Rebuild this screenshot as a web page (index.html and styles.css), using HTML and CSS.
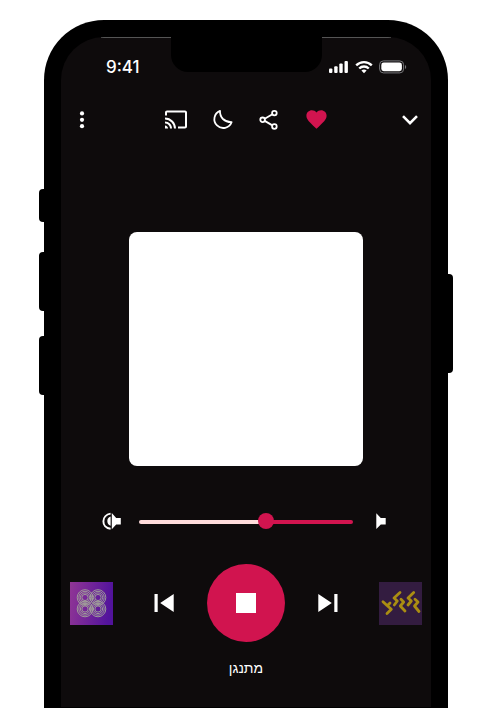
FILE: index.html
```html
<!DOCTYPE html>
<html lang="he">
<head>
<meta charset="utf-8">
<meta name="viewport" content="width=device-width, initial-scale=1">
<title>Radio player</title>
<link rel="stylesheet" href="styles.css">
</head>
<body>
<main class="phone">
  <span class="side-key mute"></span>
  <span class="side-key volume-up"></span>
  <span class="side-key volume-down"></span>
  <span class="side-key power"></span>
  <div class="notch"></div>
  <div class="screen">
    <header class="status">
      <time class="clock">9:41</time>
      <div class="indicators">
        <svg width="20" height="14" viewBox="0 0 20 14" fill="#fff" aria-hidden="true">
          <rect x="0" y="8.4" width="3.4" height="4.6" rx="1"/><rect x="5.2" y="6.2" width="3.4" height="6.8" rx="1"/><rect x="10.3" y="3.6" width="3.4" height="9.4" rx="1"/><rect x="15.5" y="1" width="3.4" height="12" rx="1"/>
        </svg>
        <svg width="18" height="14" viewBox="0 0 18 14" fill="none" stroke="#fff" stroke-width="2.3" aria-hidden="true">
          <path d="M1.2 5.4a11 11 0 0 1 15.6 0M4.2 8.5a6.8 6.8 0 0 1 9.6 0"/><path d="M9 13.2 6.4 10.6a3.8 3.8 0 0 1 5.2 0z" fill="#fff" stroke="none"/>
        </svg>
        <svg width="28" height="14" viewBox="0 0 28 14" aria-hidden="true">
          <rect x=".6" y=".9" width="24" height="12" rx="3.8" fill="none" stroke="#77777a"/><rect x="2.3" y="2.6" width="20.6" height="8.6" rx="2.4" fill="#fff"/><path d="M26 5v4c1.6-.7 1.6-3.3 0-4z" fill="#77777a"/>
        </svg>
      </div>
    </header>

    <nav class="toolbar">
      <button class="icon-button" type="button" aria-label="Menu">
        <svg width="24" height="24" viewBox="0 0 24 24" fill="#fff"><circle cx="12" cy="5.4" r="2.1"/><circle cx="12" cy="11.8" r="2.1"/><circle cx="12" cy="18.2" r="2.1"/></svg>
      </button>
      <div class="actions">
        <button class="icon-button" type="button" aria-label="Cast">
          <svg width="24" height="24" viewBox="0 0 24 24" fill="#fff"><path d="M21 2.500H3c-1.100 0-2 .9-2 2v3h2V4.500h18v14h-7v2h7c1.100 0 2-.9 2-2v-14c0-1.100-.9-2-2-2zM1 17.500v3h3c0-1.660-1.340-3-3-3zm0-4v2c2.760 0 5 2.240 5 5h2c0-3.870-3.130-7-7-7zm0-4v2a9 9 0 0 1 9 9h2c0-6.080-4.930-11-11-11z"/></svg>
        </button>
        <button class="icon-button" type="button" aria-label="Sleep timer">
          <svg width="24" height="24" viewBox="0 0 24 24" fill="none" stroke="#fff" stroke-width="1.800" stroke-linejoin="round"><path d="M9 2.800A8.900 8.900 0 1 0 20.600 14.200Q15.600 14.400 12 11Q8.700 7.600 9 2.800z"/></svg>
        </button>
        <button class="icon-button" type="button" aria-label="Share">
          <svg width="24" height="24" viewBox="0 0 24 24" fill="none" stroke="#fff" stroke-width="1.800"><circle cx="4.600" cy="11.800" r="2.300"/><circle cx="16.400" cy="5.100" r="2.300"/><circle cx="16.400" cy="18.500" r="2.300"/><path d="M6.700 10.700 14.400 6.200M6.700 12.900 14.400 17.400"/></svg>
        </button>
        <button class="icon-button" type="button" aria-label="Favourite">
          <svg width="24" height="24" viewBox="0 0 24 24" fill="#d1144f"><path d="M11.500 20.700 10.100 19.400C4.900 14.700 1.400 11.600 1.400 7.800 1.400 4.600 3.900 2.300 6.900 2.300c1.800 0 3.500.8 4.600 2.100 1.100-1.300 2.800-2.100 4.600-2.100 3 0 5.500 2.300 5.500 5.500 0 3.800-3.500 6.900-8.700 11.600z"/></svg>
        </button>
      </div>
      <button class="icon-button" type="button" aria-label="Minimise">
        <svg width="24" height="24" viewBox="0 0 24 24" fill="none" stroke="#fff" stroke-width="2.600"><path d="M5 8.200 12 15.200 19 8.200"/></svg>
      </button>
    </nav>

    <div class="artwork"></div>

    <div class="volume">
      <svg class="speaker" width="20" height="20" viewBox="0 0 20 20" fill="#fff" aria-hidden="true">
        <path d="M10.800 1 15.200 6H19.800V12.400H15.200L10.800 17.200z"/><path d="M9.600 4.600v9.200C5.200 12.600 5.200 5.800 9.600 4.600z"/><path d="M9.600 1.600C.4 3-.4 15.400 9.600 16.800" fill="none" stroke="#fff" stroke-width="1.900"/>
      </svg>
      <input class="slider" type="range" min="0" max="100" value="60" aria-label="Volume">
      <svg class="speaker" width="20" height="20" viewBox="0 0 20 20" fill="#fff" aria-hidden="true"><path d="M5.300 1.200 9.800 6H14.700V12.400H9.800L5.300 17z"/></svg>
    </div>

    <div class="controls">
      <a class="station" href="#station-88" aria-label="88">
        <svg width="43" height="43" viewBox="0 0 43 43">
          <defs>
            <linearGradient id="violet" x2="1" y2=".15"><stop stop-color="#913695"/><stop offset="1" stop-color="#52139c"/></linearGradient>
            <g id="rings" fill="none" stroke="#a3a698" stroke-width=".9"><circle r="7.800"/><circle r="6.200"/><circle r="4.600"/><circle r="3.100"/></g>
          </defs>
          <rect width="43" height="43" fill="url(#violet)"/>
          <use href="#rings" x="15" y="15.500"/><use href="#rings" x="28" y="15.500"/><use href="#rings" x="15" y="27"/><use href="#rings" x="28" y="27"/>
        </svg>
      </a>
      <div class="transport">
        <button class="skip" type="button" aria-label="Previous"><svg width="20" height="20" viewBox="0 0 20 20" fill="#fff"><path d="M.5 1h3.200v18H.5zM19.700 1v18L6.200 10z"/></svg></button>
        <button class="stop" type="button" aria-label="Stop"><svg width="20" height="20" viewBox="0 0 20 20"><path fill="#fff" d="M0 0h20v20H0z"/></svg></button>
        <button class="skip" type="button" aria-label="Next"><svg width="20" height="20" viewBox="0 0 20 20" fill="#fff"><path d="M16.300 1h3.200v18h-3.200zM.3 1v18L13.800 10z"/></svg></button>
      </div>
      <a class="station" href="#station-next" aria-label="Next station">
        <svg width="43" height="43" viewBox="0 0 43 43">
          <rect width="43" height="43" fill="#331c40"/>
          <path fill="none" stroke="#aa8d12" stroke-width="2.800" stroke-linecap="round" stroke-linejoin="round" d="M4 19.700 8.300 23.700 11 21M8.300 23.700 12.300 27.300 8 31.500M21 10.500 15 16 18.300 19 15.300 23M22 17.300 24.700 20 21.300 24 26 29M34.700 10.500 29 16 32.300 19 29 23M36 17.300 39 20 35.500 24 40 29.500"/>
        </svg>
      </a>
    </div>
    <p class="state" dir="rtl">מתנגן</p>
  </div>
</main>
</body>
</html>
```

FILE: styles.css
```css
* {
  box-sizing: border-box;
}

body {
  margin: 0;
  background: #fff;
  color: #fff;
  font-family: Inter, "Open Sans", sans-serif;
}

.phone {
  position: relative;
  display: flex;
  min-height: calc(100vh - 20px);
  margin: 20px 36px 0 44px;
  padding: 17px 17px 1px;
  border-radius: 60px 60px 0 0;
  background: #000;
}

.side-key {
  position: absolute;
  left: -5px;
  width: 10px;
  height: 59px;
  border-radius: 4px;
  background: #000;
}

.mute {
  top: 169px;
  height: 33px;
}

.volume-up {
  top: 232px;
}

.volume-down {
  top: 316px;
}

.power {
  top: 254px;
  right: -5px;
  left: auto;
  height: 99px;
}

.notch {
  position: absolute;
  top: 16px;
  right: 126px;
  left: 127px;
  height: 36px;
  border-radius: 0 0 17px 17px;
  background: #000;
}

.screen {
  display: flex;
  flex: 1;
  flex-direction: column;
  min-width: 0;
  border-radius: 43px 43px 0 0;
  background: linear-gradient(#555, #555) center top / 290px 1px no-repeat #0e0b0c;
}

.status {
  display: flex;
  align-items: center;
  justify-content: space-between;
  height: 60px;
  padding: 0 24px 0 45px;
}

.clock {
  font-size: 17px;
  font-weight: 500;
  line-height: 20px;
}

.indicators {
  display: flex;
  gap: 6px;
}

.toolbar {
  display: flex;
  align-items: center;
  justify-content: space-between;
  height: 46px;
  padding: 0 9px;
}

.actions {
  display: flex;
  gap: 23px;
}

button {
  display: grid;
  flex: none;
  place-items: center;
  padding: 0;
  border: 0;
  background: none;
  cursor: pointer;
}

svg {
  display: block;
  flex: none;
}

.icon-button {
  width: 24px;
  height: 24px;
}

.artwork {
  width: 234px;
  max-width: 80%;
  aspect-ratio: 1;
  margin: 89px auto 0;
  border-radius: 8px;
  background: #fff;
}

.volume {
  display: flex;
  align-items: center;
  gap: 18px;
  margin-top: 46px;
  padding: 0 40px;
}

.slider {
  flex: 1;
  min-width: 0;
  height: 20px;
  margin: 0;
  appearance: none;
  background: none;
}

.slider::-webkit-slider-runnable-track {
  height: 4px;
  border-radius: 2px;
  background: linear-gradient(90deg, #ffdcdc 60%, #d1144f 60%);
}

.slider::-webkit-slider-thumb {
  width: 16px;
  height: 16px;
  margin-top: -7px;
  border-radius: 50%;
  appearance: none;
  background: #d1144f;
}

.controls {
  display: flex;
  align-items: center;
  justify-content: space-between;
  margin-top: 32px;
  padding: 0 9px;
}

.transport {
  display: flex;
  align-items: center;
  gap: 33px;
}

.stop {
  width: 78px;
  height: 78px;
  border-radius: 50%;
  background: #d1144f;
}

.state {
  margin: 16px 0 0;
  font-family: "Liberation Sans", Arial, sans-serif;
  font-size: 14px;
  line-height: 20px;
  text-align: center;
}
```
